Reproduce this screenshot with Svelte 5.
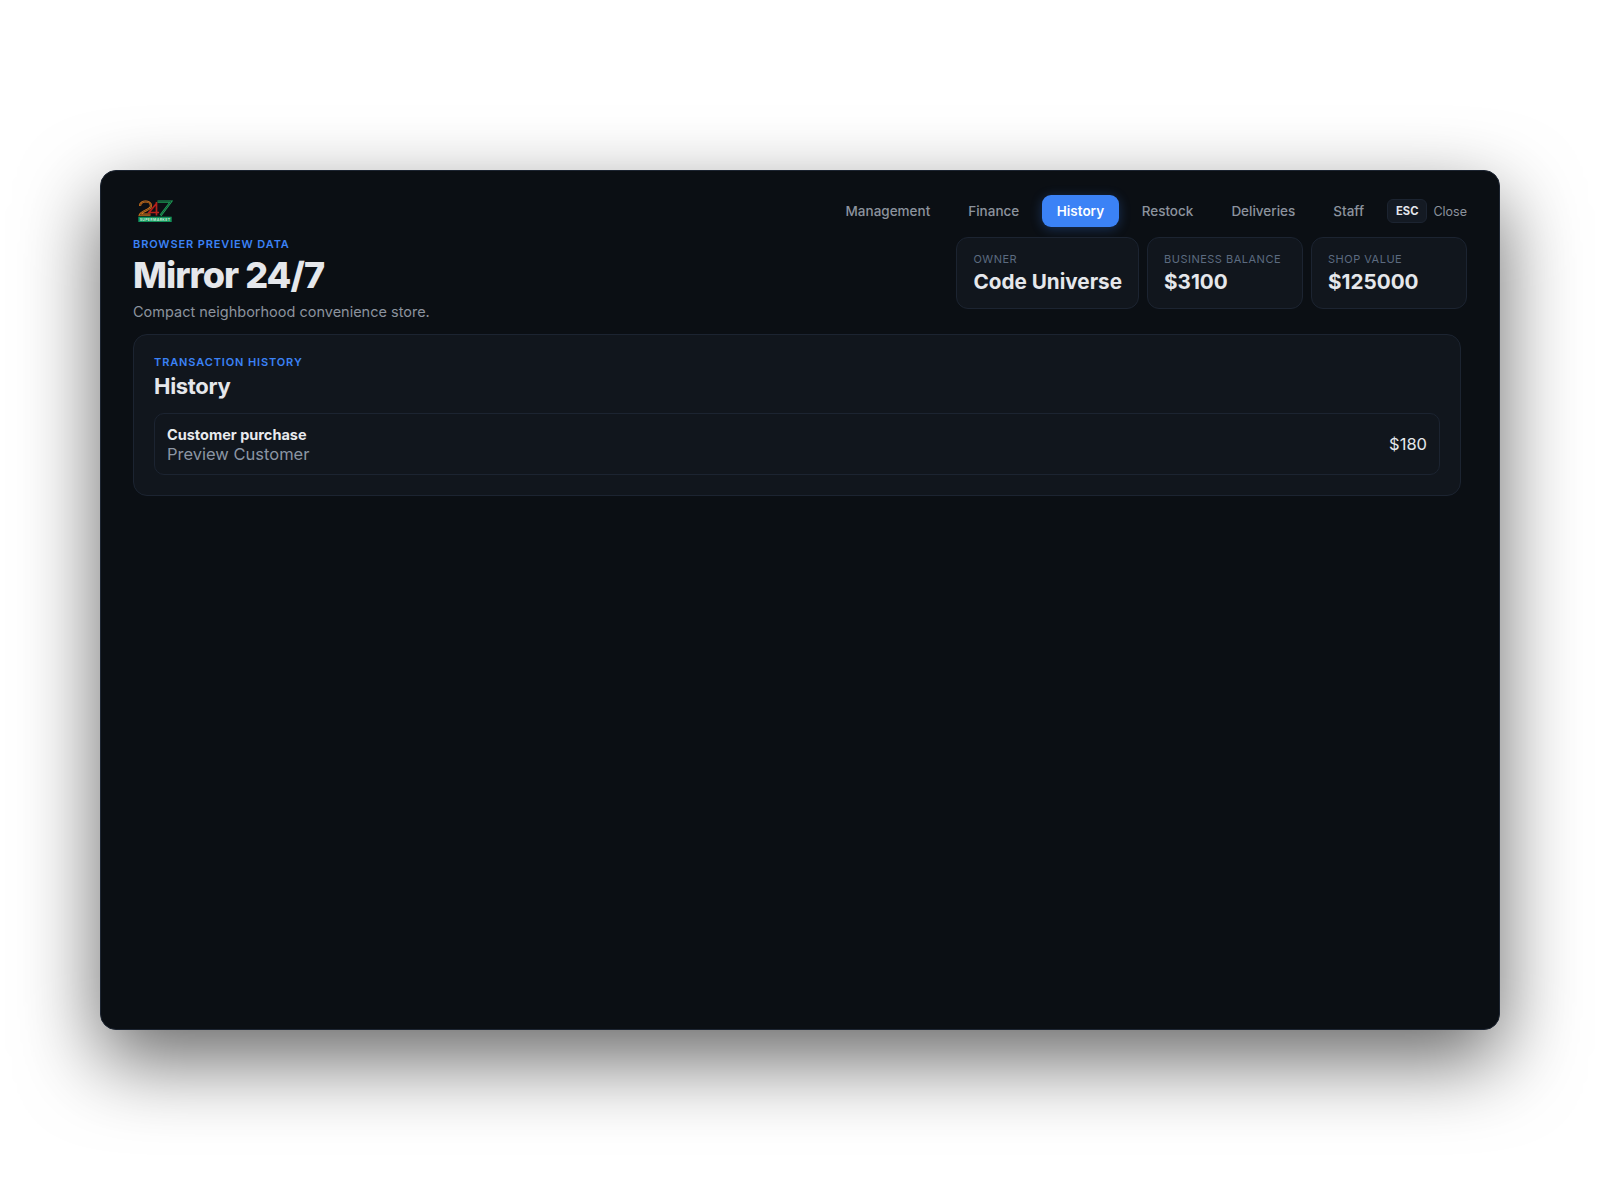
<script>
  const tabs = ["Management", "Finance", "History", "Restock", "Deliveries", "Staff"];
  const stats = [
    { label: "Owner", value: "Code Universe" },
    { label: "Business balance", value: "$3100" },
    { label: "Shop value", value: "$125000" },
  ];
  let active = "History";
</script>

<div class="page">
  <div class="window">
    <div class="accent"></div>
    <header class="topbar">
      <svg class="logo" viewBox="0 0 36 24" width="36" height="24" fill="none">
        <path d="M3 7c0-6 11-6 11 0 0 4-9 4.500-11 8.700h10.500" stroke="#d9781e" stroke-width="2.200"/>
        <path d="M3 7c0-6 11-6 11 0 0 4-9 4.500-11 8.700h10.500" stroke="#0b0f14" stroke-width=".5"/>
        <path d="M19.500 4.500l-7.500 9h10M19.500 3v13.500" stroke="#b3201a" stroke-width="1.700"/>
        <path d="M20.500 2.600h13.500L23.500 16.500" stroke="#1fa35a" stroke-width="2.200"/>
        <path d="M20.500 2.600h13.500L23.500 16.500" stroke="#0b0f14" stroke-width=".5"/>
        <rect x="1.300" y="17.700" width="33.400" height="5.300" fill="#12935a"/>
        <text x="18" y="21.700" text-anchor="middle" class="logo-text">SUPERMARKET</text>
      </svg>
      <nav class="tabs">
        {#each tabs as tab}
          <button class="tab" class:active={tab === active} onclick={() => (active = tab)}>{tab}</button>
        {/each}
      </nav>
      <div class="close">
        <span class="esc">ESC</span>
        <span class="close-label">Close</span>
      </div>
    </header>

    <section class="hero">
      <div class="hero-text">
        <p class="eyebrow">Browser preview data</p>
        <h1>Mirror 24/7</h1>
        <p class="sub">Compact neighborhood convenience store.</p>
      </div>
      <div class="stats">
        {#each stats as stat}
          <div class="stat">
            <span class="stat-label">{stat.label}</span>
            <strong class="stat-value">{stat.value}</strong>
          </div>
        {/each}
      </div>
    </section>

    <main class="content">
      <section class="panel">
        <p class="eyebrow">Transaction history</p>
        <h2>History</h2>
        <div class="row">
          <div class="row-text">
            <strong>Customer purchase</strong>
            <span>Preview Customer</span>
          </div>
          <span class="amount">$180</span>
        </div>
      </section>
    </main>
  </div>
</div>

<style>
  :global(body) {
    background: #fff;
    font-family: Inter, "Liberation Sans", sans-serif;
  }
  .page {
    height: 1200px;
    display: flex;
    align-items: center;
    justify-content: center;
  }
  .window {
    position: relative;
    box-sizing: border-box;
    width: 1400px;
    height: 860px;
    padding: 24px 32px 32px;
    display: flex;
    flex-direction: column;
    background: #0b0f14;
    border: 1px solid #1c2431;
    border-radius: 16px;
    box-shadow: 0 30px 80px rgba(0, 0, 0, 0.6);
    overflow: hidden;
  }
  .accent {
    position: absolute;
    top: -1px;
    left: 0;
    right: 0;
    height: 1px;
    background: linear-gradient(90deg, #1c2431, #2b4a78 30%, #3e3a78 75%, #1c2431);
  }
  .topbar {
    display: flex;
    align-items: center;
    justify-content: space-between;
    height: 32px;
  }
  .logo {
    margin-left: 4px;
  }
  .logo-text {
    fill: #c9f2dc;
    font-size: 3.600px;
    font-weight: 700;
    letter-spacing: 0.3px;
  }
  .tabs {
    display: flex;
    gap: 8px;
    margin-left: auto;
  }
  .tab {
    height: 32px;
    padding: 0 15px;
    border: none;
    border-radius: 9px;
    background: transparent;
    color: #8c939e;
    font: 500 13.500px Inter, sans-serif;
  }
  .tab.active {
    padding: 0 14.500px;
    background: #3b82f6;
    color: #fff;
    font-weight: 600;
    box-shadow: 0 2px 12px rgba(59, 130, 246, 0.3);
  }
  .close {
    display: flex;
    align-items: center;
    gap: 6px;
    margin-left: 8px;
  }
  .esc {
    padding: 4px 8px;
    border: 1px solid #1c2431;
    border-radius: 6px;
    background: #141a23;
    color: #e5e7eb;
    font-size: 11.200px;
    font-weight: 700;
    line-height: 14px;
  }
  .close-label {
    color: #8b929c;
    font-size: 12.500px;
  }
  .hero {
    display: flex;
    justify-content: space-between;
    align-items: flex-start;
    margin-top: 10px;
  }
  .eyebrow {
    margin: 0;
    color: #3b82f6;
    font-size: 11px;
    font-weight: 600;
    letter-spacing: 0.88px;
    line-height: 14px;
    text-transform: uppercase;
  }
  h1 {
    margin: 2px 0 0;
    color: #e5e7eb;
    font-size: 36px;
    font-weight: 800;
    letter-spacing: -0.95px;
    line-height: 44px;
  }
  .sub {
    margin: 5px 0 0;
    color: #8c939e;
    font-size: 14.500px;
    line-height: 20px;
  }
  .stats {
    display: flex;
    gap: 8px;
  }
  .stat {
    display: flex;
    flex-direction: column;
    box-sizing: border-box;
    height: 72px;
    min-width: 156px;
    padding: 14px 16px;
    border: 1px solid #1c2431;
    border-radius: 12px;
    background: #11161d;
  }
  .stat-label {
    color: #5c6b80;
    font-size: 11px;
    letter-spacing: 0.5px;
    line-height: 14px;
    text-transform: uppercase;
  }
  .stat-value {
    margin-top: 2px;
    color: #e5e7eb;
    font-size: 20.700px;
    font-weight: 700;
    line-height: 28px;
  }
  .content {
    flex: 1;
    margin-top: 12px;
    padding-right: 6px;
  }
  .panel {
    padding: 20px;
    border: 1px solid #1c2431;
    border-radius: 14px;
    background: #11161d;
  }
  h2 {
    margin: 3px 0 13px;
    color: #e5e7eb;
    font-size: 22px;
    font-weight: 700;
    letter-spacing: -0.3px;
    line-height: 28px;
  }
  .row {
    display: flex;
    align-items: center;
    justify-content: space-between;
    padding: 11px 12px 10px;
    border: 1px solid #1c2431;
    border-radius: 10px;
    background: #11161d;
  }
  .row-text {
    display: flex;
    flex-direction: column;
  }
  .row-text strong {
    color: #e8eaee;
    font-size: 14.500px;
    font-weight: 700;
    line-height: 19px;
  }
  .row-text span {
    margin-top: 1px;
    color: #8b95a3;
    font-size: 16.500px;
    line-height: 19px;
  }
  .amount {
    margin-bottom: 2px;
    color: #e5e7eb;
    font-size: 16.500px;
  }
</style>
